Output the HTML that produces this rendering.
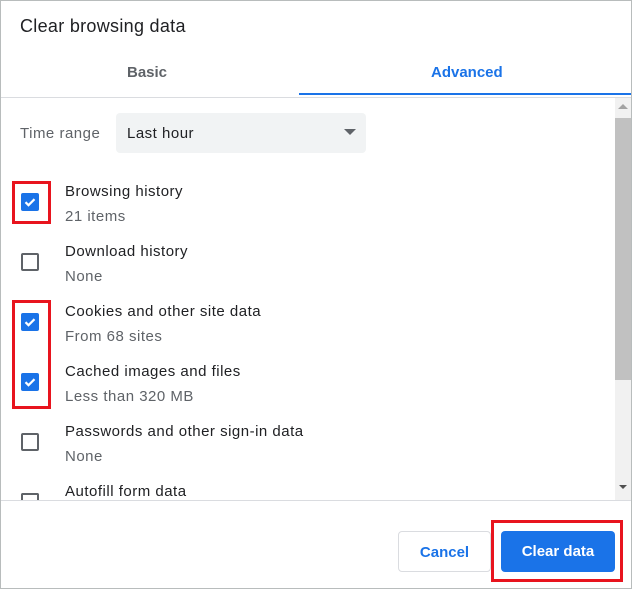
<!DOCTYPE html><html><head><style>
body{margin:0;width:632px;height:589px;overflow:hidden;background:#fff;font-family:"Liberation Sans",sans-serif;position:relative}
.a{position:absolute}
.t{color:#202124;font-size:15px;letter-spacing:0.5px}
.s{color:#5f6368;font-size:15px;letter-spacing:0.5px}
.cb{position:absolute;left:21px;width:18px;height:18px;border-radius:2px;box-sizing:border-box}
.on{background:#1a73e8}
.off{border:2px solid #5f6368}
.red{position:absolute;border:3px solid #e8141e;box-sizing:border-box}
</style></head><body>
<div class="a" style="left:0;top:0;width:632px;height:589px;border:1px solid #b8bcbc;box-sizing:border-box"></div>
<div class="a" style="left:20px;top:16px;font-size:18px;color:#202124;letter-spacing:0.3px">Clear browsing data</div>
<div class="a" style="left:127px;top:64px;font-size:15px;color:#5f6368;font-weight:bold">Basic</div>
<div class="a" style="left:431px;top:64px;font-size:15px;color:#1a73e8;font-weight:bold">Advanced</div>
<div class="a" style="left:299px;top:93px;width:332px;height:2px;background:#1a73e8"></div>
<div class="a" style="left:1px;top:97px;width:630px;height:1px;background:#dadce0"></div>
<div class="a" style="left:615px;top:98px;width:16px;height:402px;background:#f1f1f1"></div>
<div class="a" style="left:615px;top:118px;width:16px;height:262px;background:#c1c1c1"></div>
<div class="a" style="left:618px;top:104px;width:0;height:0;border-left:5px solid transparent;border-right:5px solid transparent;border-bottom:5px solid #a3a3a3"></div>
<div class="a" style="left:619px;top:485px;width:0;height:0;border-left:4px solid transparent;border-right:4px solid transparent;border-top:4px solid #505050"></div>
<div class="a s" style="left:20px;top:125px">Time range</div>
<div class="a" style="left:116px;top:113px;width:250px;height:40px;background:#f1f3f4;border-radius:4px"></div>
<div class="a t" style="left:127px;top:125px">Last hour</div>
<div class="a" style="left:344px;top:129px;width:0;height:0;border-left:6px solid transparent;border-right:6px solid transparent;border-top:6px solid #5f6368"></div>
<div class="cb on" style="top:193px"><svg width="18" height="18"><path d="M4.5 9.2l3 3 6-6" stroke="#fff" stroke-width="2.2" fill="none"/></svg></div>
<div class="a t" style="left:65px;top:183px">Browsing history</div><div class="a s" style="left:65px;top:208px">21 items</div>
<div class="cb off" style="top:253px"></div>
<div class="a t" style="left:65px;top:243px">Download history</div><div class="a s" style="left:65px;top:268px">None</div>
<div class="cb on" style="top:313px"><svg width="18" height="18"><path d="M4.5 9.2l3 3 6-6" stroke="#fff" stroke-width="2.2" fill="none"/></svg></div>
<div class="a t" style="left:65px;top:303px">Cookies and other site data</div><div class="a s" style="left:65px;top:328px">From 68 sites</div>
<div class="cb on" style="top:373px"><svg width="18" height="18"><path d="M4.5 9.2l3 3 6-6" stroke="#fff" stroke-width="2.2" fill="none"/></svg></div>
<div class="a t" style="left:65px;top:363px">Cached images and files</div><div class="a s" style="left:65px;top:388px">Less than 320 MB</div>
<div class="cb off" style="top:433px"></div>
<div class="a t" style="left:65px;top:423px">Passwords and other sign-in data</div><div class="a s" style="left:65px;top:448px">None</div>
<div class="cb off" style="top:493px;height:7px;border-bottom:none;border-radius:2px 2px 0 0"></div>
<div class="a t" style="left:65px;top:483px;height:17px;overflow:hidden">Autofill form data</div>
<div class="a" style="left:1px;top:500px;width:630px;height:1px;background:#dadce0"></div>
<div class="a" style="left:398px;top:531px;width:93px;height:41px;border:1px solid #dadce0;border-radius:4px;box-sizing:border-box;color:#1a73e8;font-weight:bold;font-size:15px;text-align:center;line-height:41px">Cancel</div>
<div class="a" style="left:501px;top:531px;width:114px;height:41px;background:#1a73e8;border-radius:4px;color:#fff;font-weight:bold;font-size:15px;text-align:center;line-height:42px">Clear data</div>
<div class="red" style="left:12px;top:181px;width:39px;height:43px"></div>
<div class="red" style="left:12px;top:300px;width:39px;height:109px"></div>
<div class="red" style="left:491px;top:520px;width:132px;height:62px"></div>
</body></html>
